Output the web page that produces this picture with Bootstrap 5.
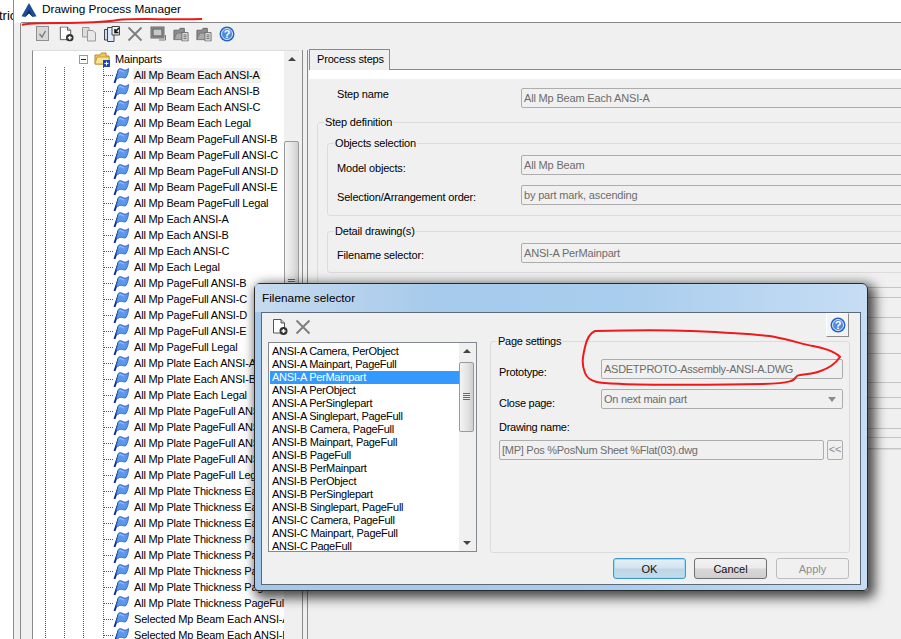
<!DOCTYPE html>
<html lang="en">
<head>
<meta charset="UTF-8">
<title>Drawing Process Manager</title>
<link href="https://cdn.jsdelivr.net/npm/bootstrap@5.3.0/dist/css/bootstrap.min.css" rel="stylesheet">
<style>
html, body { margin: 0; height: 639px; overflow: hidden; }
body { width: 901px; background: #f0f0f0; color: #000; font: 11px/16px "Liberation Sans", Arial, sans-serif; letter-spacing: -.17px; position: relative; }
.app-title { height: 23px; background: #fff; }
.outside-strip { width: 14px; flex: none; border-right: 1px solid #8a8a8a; background: #fff; overflow: hidden; }
.outside-strip span { display: block; margin-top: 8px; margin-left: -1px; font-size: 13px; letter-spacing: 0; }
.app-logo { margin: 3px 0 0 7px; flex: none; }
.title-text { font-size: 11.8px; letter-spacing: 0; padding: 1px 0 0 5px; }
.app-body { height: 616px; }
.frame-left { width: 7px; flex: none; border-right: 1px solid #8a8a8a; }
.main-zone { width: 880px; flex: none; border-top: 1px solid #8a8a8a; margin-top: -1px; }
.tool-strip { height: 27px; padding: 3px 0 0 14px; gap: 7px; }
.tool-strip svg { width: 16px; height: 16px; flex: none; }
.tree-pane { width: 267px; margin-left: 11px; height: 590px; background: #fff; border-left: 1px solid #8a8a8a; border-top: 1px solid #dcdcdc; overflow: hidden; position: relative; flex: none; }
.tree-rows { width: 251px; flex: none; height: 590px; overflow: hidden; background-image: linear-gradient(#555 50%, transparent 50%), linear-gradient(#555 50%, transparent 50%), linear-gradient(#555 50%, transparent 50%), linear-gradient(#555 50%, transparent 50%); background-size: 1px 2px; background-repeat: repeat-y; background-position: 12px 0, 31px 0, 50px 0, 70px 16px; }
.tree-row { height: 16px; white-space: nowrap; overflow: hidden; padding-left: 70px; }
.tree-row svg { flex: none; }
.dots { width: 10px; flex: none; border-top: 1px dotted #555; }
.row-text { padding: 0 1px; margin-left: 4px; line-height: 15px; }
.row-on { background: #f0f0f0; }
.parent-row { padding-left: 46px; background: #fff; }
.expander { width: 9px; height: 9px; flex: none; border: 1px solid #999; background: #fff; position: relative; margin-right: 6px; }
.expander::after { content: ""; position: absolute; left: 1px; right: 1px; top: 3px; height: 1px; background: #222; }
.scroll-track { width: 15px; background: #f0f0f0; height: 590px; position: relative; flex: none; }
.scroll-arrow { width: 0; height: 0; border: 4px solid transparent; border-top: 0; border-bottom: 4px solid #444; position: absolute; left: 4px; top: 6px; }
.scroll-thumb { position: absolute; left: 0; width: 15px; border: 1px solid #9a9a9a; border-radius: 2px; background: linear-gradient(90deg, #f4f4f4, #e2e2e2 60%, #cfcfcf); }
.grip { position: absolute; left: 3px; width: 7px; height: 7px; background: repeating-linear-gradient(#666 0 1px, #eee 1px 2px); }
.splitter { width: 6px; flex: none; margin-left: 3px; border-left: 1px solid #8a8a8a; border-right: 1px solid #8a8a8a; }
.steps-pane { width: 592px; flex: none; margin-left: 1px; margin-top: -1px; overflow: hidden; height: 591px; }
.tab-head { height: 21px; }
.tab-one { width: 81px; height: 21px; flex: none; white-space: nowrap; border: 1px solid #8a8a8a; border-bottom: 0; background: #f0f0f0; padding: 1px 0 0 7px; }
.tab-rest { flex: 1; border-bottom: 1px solid #8a8a8a; }
.tab-white { height: 9px; background: #fff; }
.form-line { height: 20px; margin-bottom: 10px; }
.field-cap { flex: none; white-space: nowrap; }
.win-input { flex: 1; min-width: 0; height: 20px; border: 1px solid #adadad; border-radius: 2px; color: #6d6d6d; padding: 1px 2px; line-height: 16px; white-space: nowrap; background: #f0f0f0; }
.step-form { padding: 9px 0 0 8px; width: 640px; }
.step-name-line { margin-bottom: 0; }
.step-name-cap { width: 204px; padding-left: 20px; margin-top: -2px; }
.nested-cap { width: 193px; padding-left: 9px; }
.win-group { border: 1px solid #dcdcdc; border-radius: 3px; margin: 0; padding: 0; min-width: 0; }
.win-group > legend { float: none; width: auto; font-size: 11px; line-height: 16px; margin: 0 0 0 6px; padding: 0 1px; }
.outer-group { margin-top: 6px; }
.inner-group { margin: 5px 0 0 9px; }
.detail-group { margin-top: 7px; }
.detail-group .form-line { margin-bottom: 9px; }
.behind-line { border-bottom: 1px solid #c4c4c4; }
.dialog-window { position: absolute; left: 254px; top: 283px; width: 614px; height: 308px; border: 1px solid #2a2a2a; border-radius: 6px 6px 4px 4px; box-shadow: 4px 4px 12px 3px rgba(0,0,0,.7); background: linear-gradient(90deg, #a4c8ea 0, #a9cded 60%, #c6ddf4 100%); padding: 0 6px 6px 6px; }
.dialog-title { height: 28px; padding: 6px 0 0 7px; font-size: 11.8px; letter-spacing: 0; background: linear-gradient(90deg, rgba(210,225,240,.75), rgba(170,205,238,0) 30%); margin: 0 -6px; }
.dialog-client { height: 273px; border: 1px solid #5a6a78; background: #f0f0f0; position: relative; }
.dialog-top { height: 29px; padding: 6px 0 0 9px; gap: 7px; }
.dialog-cols { padding-left: 6px; }
.name-list { width: 209px; height: 210px; flex: none; border: 1px solid #828790; background: #fff; overflow: hidden; }
.list-rows { width: 190px; flex: none; padding: 2px 0 0 1px; overflow: hidden; height: 208px; letter-spacing: -.28px; }
.list-line { height: 13px; line-height: 13px; padding-left: 2px; white-space: nowrap; }
.list-on { background: #3399ff; color: #fff; }
.list-scroll { width: 17px; flex: none; position: relative; background: #f0f0f0; }
.list-arrow-down { width: 0; height: 0; border: 4px solid transparent; border-bottom: 0; border-top: 4px solid #444; position: absolute; left: 4px; bottom: 6px; }
.page-group { width: 360px; height: 220px; flex: none; margin-left: 13px; margin-top: -9px; letter-spacing: -.27px; }
.page-line { height: 20px; margin: 0 6px 10px 8px; }
.first-line { margin-top: 10px; }
.page-cap { width: 102px; flex: none; }
.cap-proto { margin-top: 5px; }
.cap-close { margin-top: 6px; }
.name-cap { margin: 5px 0 5px 8px; }
.combo-arrow { width: 0; height: 0; border: 4px solid transparent; border-bottom: 0; border-top: 5px solid #8b8b8b; margin: 6px 4px 0 auto; }
.more-btn { width: 16px; height: 20px; margin-left: 3px; border: 1px solid #adadad; border-radius: 2px; color: #8a8a8a; line-height: 16px; text-align: center; flex: none; }
.help-btn { position: absolute; right: 11px; top: 0; width: 23px; height: 24px; background: #f4f4f4; border: 1px solid; border-color: #fff #8a8a8a #8a8a8a #fff; display: flex; align-items: center; justify-content: center; }
.dialog-foot { gap: 9px; padding: 5px 11px 0 0; justify-content: flex-end; }
.win-btn { width: 73px; height: 21px; padding: 0; border-radius: 3px; font-size: 11px; line-height: 18px; color: #111; border: 1px solid #707070; background: linear-gradient(#f2f2f2 0, #ebebeb 48%, #d8d8d8 52%, #cfcfcf 100%); }
.win-btn-main { margin-right: -1px; border-color: #3c9ad0; box-shadow: inset 0 0 0 1px #9fdcf5; background: linear-gradient(#e6f0f7 0, #d3e3ef 48%, #bdd5e6 52%, #c3dceb 100%); }
.win-btn:disabled { opacity: 1; color: #8f8f8f; border-color: #bcbcbc; background: #f0f0f0; }
.ink-layer { position: absolute; left: 0; top: 0; pointer-events: none; }
</style>
</head>
<body>
<svg width="0" height="0" class="position-absolute">
  <symbol id="flag-icon" viewBox="0 0 16 16">
    <path d="M1.500 16 5.500 4" stroke="#0d2fa8" stroke-width="2" fill="none"/>
    <path d="M5 3C7 0 9 2.500 11 3S14 2.500 15.500 1.500C15.500 5 14.500 8 13 10.500 11 12 9 9.500 6.500 10.500 5 11 4 12 3 13Z" fill="#5d97ea" stroke="#2458c0" stroke-width=".8"/>
    <path d="M6 4C8 2.500 9 5 11 5" stroke="#a9cdf7" fill="none"/>
  </symbol>
  <symbol id="doc-plus" viewBox="0 0 17 16">
    <path d="M2.500.5H10L13.500 4V14H2.500Z" fill="#fdfdfd" stroke="#555"/>
    <path d="M10 .5V4H13.500" fill="#ccc" stroke="#555"/>
    <circle cx="12.500" cy="12" r="4" fill="#333"/>
    <path d="M10.500 12H14.500M12.500 10V14" stroke="#fff" stroke-width="1.500"/>
  </symbol>
  <symbol id="cross-icon" viewBox="0 0 16 16">
    <path d="M1.500 1.500 14.500 14.500M14.500 1.500 1.500 14.500" stroke="#808080" stroke-width="2"/>
  </symbol>
  <symbol id="help-icon" viewBox="0 0 16 16">
    <circle cx="8" cy="8" r="7.500" fill="#2a63c6"/>
    <circle cx="8" cy="8" r="5.500" fill="#4f8ae0" stroke="#dbe8fa"/>
    <text x="8" y="12" text-anchor="middle" font-family="Liberation Sans" font-weight="700" font-size="11" fill="#fff">?</text>
  </symbol>
  <symbol id="folder-docs" viewBox="0 0 17 16">
    <path d="M1 4H6L7.500 2H12V6L1 14Z" fill="#8d8d8d" stroke="#666"/>
    <path d="M1 14 4 7H12V14Z" fill="#aaa" stroke="#777"/>
    <path d="M9.500 6.500H16V15.500H9.500Z" fill="#e9e9e9" stroke="#666"/>
    <path d="M11 9H14.500M11 11H14.500M11 13H14.500" stroke="#555"/>
  </symbol>
</svg>

<div class="app-title d-flex">
  <div class="outside-strip"><span>tric</span></div>
  <svg width="16" height="15" viewBox="0 0 16 16" class="app-logo"><path d="M8 0 16 14 12 15 8 11 4 15 0 14Z" fill="#1d4e96"/><path d="M8 7 12 15 8 11 4 15Z" fill="#0c2f68"/></svg>
  <div class="title-text">Drawing Process Manager</div>
</div>

<div class="app-body d-flex">
  <div class="outside-strip"></div>
  <div class="frame-left"></div>
  <div class="main-zone">
    <div class="tool-strip d-flex">
      <svg viewBox="0 0 16 16"><rect x="1.500" y=".5" width="12" height="14" fill="#d8d8d8" stroke="#8f8f8f"/><path d="M4.500 8 7 11 10.500 5" stroke="#777" stroke-width="1.300" fill="none"/></svg>
      <svg viewBox="0 0 17 16"><use href="#doc-plus"/></svg>
      <svg viewBox="0 0 16 16"><path d="M1.500 1.500H8V11H1.500Z" fill="#ddd" stroke="#999"/><path d="M6.500 4.500H12L14.500 7V15H6.500Z" fill="#e8e8e8" stroke="#999"/></svg>
      <svg viewBox="0 0 16 16"><path d="M.5 3.500H7V14H.5Z" fill="#cfdff2" stroke="#444"/><path d="M3.500 1.500H10V15.500H3.500Z" fill="#dfeafa" stroke="#444"/><path d="M8 .5H15.500V9H8Z" fill="#eee" stroke="#444"/><path d="M15 2 11 6M11 3V6.500H14.500" stroke="#111" stroke-width="1.500" fill="none"/></svg>
      <svg viewBox="0 0 16 16"><use href="#cross-icon"/></svg>
      <svg viewBox="0 0 16 16"><rect x="1" y="1" width="13" height="11" fill="#9c9c9c" stroke="#666"/><rect x="3" y="3" width="9" height="7" fill="#c8c8c8" stroke="#555"/><path d="M9 14H15.500V9" stroke="#777" fill="none"/></svg>
      <svg viewBox="0 0 17 16"><use href="#folder-docs"/></svg>
      <svg viewBox="0 0 17 16"><use href="#folder-docs"/></svg>
      <svg viewBox="0 0 16 16"><use href="#help-icon"/></svg>
    </div>
    <div class="d-flex">
      <div class="tree-pane d-flex">
        <div class="tree-rows" id="treeRows"></div>
        <div class="scroll-track">
          <div class="scroll-arrow"></div>
          <div class="scroll-thumb" style="top:90px;height:300px"><div class="grip" style="top:137px"></div></div>
        </div>
      </div>
      <div class="splitter"></div>
      <div class="steps-pane">
        <div class="tab-head d-flex">
          <div class="tab-one">Process steps</div>
          <div class="tab-rest"></div>
        </div>
        <div class="tab-white"></div>
        <div class="step-form">
          <div class="form-line step-name-line d-flex">
            <div class="field-cap step-name-cap">Step name</div>
            <div class="win-input">All Mp Beam Each ANSI-A</div>
          </div>
          <fieldset class="win-group outer-group">
            <legend>Step definition</legend>
            <fieldset class="win-group inner-group">
              <legend>Objects selection</legend>
              <div class="form-line d-flex mt-1">
                <div class="field-cap nested-cap cap-proto">Model objects:</div>
                <div class="win-input">All Mp Beam</div>
              </div>
              <div class="form-line d-flex">
                <div class="field-cap nested-cap mt-1">Selection/Arrangement order:</div>
                <div class="win-input">by part mark, ascending</div>
              </div>
            </fieldset>
            <fieldset class="win-group inner-group detail-group">
              <legend>Detail drawing(s)</legend>
              <div class="form-line d-flex mt-1">
                <div class="field-cap nested-cap mt-1">Filename selector:</div>
                <div class="win-input">ANSI-A PerMainpart</div>
              </div>
            </fieldset>
            <div id="behindLines"></div>
          </fieldset>
        </div>
      </div>
    </div>
  </div>
</div>

<div class="dialog-window">
  <div class="dialog-title">Filename selector</div>
  <div class="dialog-client">
    <div class="dialog-top d-flex">
      <svg width="17" height="16"><use href="#doc-plus"/></svg>
      <svg width="16" height="16"><use href="#cross-icon"/></svg>
    </div>
    <div class="help-btn"><svg width="16" height="16"><use href="#help-icon"/></svg></div>
    <div class="dialog-cols d-flex">
      <div class="name-list d-flex">
        <div class="list-rows" id="nameRows"></div>
        <div class="list-scroll">
          <div class="scroll-arrow"></div>
          <div class="scroll-thumb" style="top:19px;height:70px"><div class="grip" style="top:30px"></div></div>
          <div class="list-arrow-down"></div>
        </div>
      </div>
      <fieldset class="win-group page-group">
        <legend>Page settings</legend>
        <div class="page-line first-line d-flex">
          <div class="page-cap cap-proto">Prototype:</div>
          <div class="win-input">ASDETPROTO-Assembly-ANSI-A.DWG</div>
        </div>
        <div class="page-line d-flex">
          <div class="page-cap cap-close">Close page:</div>
          <div class="win-input d-flex">On next main part<span class="combo-arrow"></span></div>
        </div>
        <div class="name-cap">Drawing name:</div>
        <div class="page-line d-flex">
          <div class="win-input">[MP] Pos %PosNum Sheet %Flat(03).dwg</div>
          <div class="more-btn">&lt;&lt;</div>
        </div>
      </fieldset>
    </div>
    <div class="dialog-foot d-flex">
      <button type="button" class="btn win-btn win-btn-main">OK</button>
      <button type="button" class="btn win-btn">Cancel</button>
      <button type="button" class="btn win-btn" disabled>Apply</button>
    </div>
  </div>
</div>

<svg class="ink-layer" width="901" height="639" fill="none" stroke="#f01818" stroke-width="2">
  <path d="M22 25C26 23 40 23 60 23S105 22 118 20 170 20 202 19"/>
  <path d="M840 357C835 351 820 347 813 346S790 340 775 337 713 332 690 331 640 330 595 331C590 333 587 338 585 347S581 363 585 373 600 383 622 384 720 385 763 384 790 376 800 375 830 372 840 357Z"/>
</svg>

<script>
  // tree rows
  const treeItems = ["All Mp Beam Each ANSI-A","All Mp Beam Each ANSI-B","All Mp Beam Each ANSI-C","All Mp Beam Each Legal",
    "All Mp Beam PageFull ANSI-B","All Mp Beam PageFull ANSI-C","All Mp Beam PageFull ANSI-D","All Mp Beam PageFull ANSI-E","All Mp Beam PageFull Legal",
    "All Mp Each ANSI-A","All Mp Each ANSI-B","All Mp Each ANSI-C","All Mp Each Legal",
    "All Mp PageFull ANSI-B","All Mp PageFull ANSI-C","All Mp PageFull ANSI-D","All Mp PageFull ANSI-E","All Mp PageFull Legal",
    "All Mp Plate Each ANSI-A","All Mp Plate Each ANSI-B","All Mp Plate Each Legal",
    "All Mp Plate PageFull ANSI-B","All Mp Plate PageFull ANSI-C","All Mp Plate PageFull ANSI-D","All Mp Plate PageFull ANSI-E","All Mp Plate PageFull Legal",
    "All Mp Plate Thickness Each ANSI-A","All Mp Plate Thickness Each ANSI-B","All Mp Plate Thickness Each Legal","All Mp Plate Thickness PageFull ANSI-B","All Mp Plate Thickness PageFull ANSI-C","All Mp Plate Thickness PageFull ANSI-D","All Mp Plate Thickness PageFull ANSI-E","All Mp Plate Thickness PageFull Legal",
    "Selected Mp Beam Each ANSI-A","Selected Mp Beam Each ANSI-B"];
  let treeHtml = `<div class="tree-row parent-row d-flex align-items-center"><span class="expander"></span>
    <svg width="17" height="16" viewBox="0 0 17 16"><path d="M1 4H6L7.500 2H12V5H15V13H1Z" fill="#f4c75e" stroke="#b98a24"/><path d="M1 13 3 6H15V13Z" fill="#fbe49a" stroke="#c99a30"/><rect x="9" y="9" width="7" height="7" fill="#1f45b8"/><path d="M12.500 10.500V14.500M10.500 12.500H14.500" stroke="#fff"/></svg>
    <span class="ms-1">Mainparts</span></div>`;
  treeItems.forEach((name, i) => {
    treeHtml += `<div class="tree-row d-flex align-items-center"><span class="dots"></span><svg width="16" height="16"><use href="#flag-icon"/></svg><span class="row-text${i === 0 ? " row-on" : ""}">${name}</span></div>`;
  });
  document.getElementById("treeRows").innerHTML = treeHtml;

  // filename selector list
  const fileNames = ["ANSI-A Camera, PerObject","ANSI-A Mainpart, PageFull","ANSI-A PerMainpart","ANSI-A PerObject","ANSI-A PerSinglepart","ANSI-A Singlepart, PageFull",
    "ANSI-B Camera, PageFull","ANSI-B Mainpart, PageFull","ANSI-B PageFull","ANSI-B PerMainpart","ANSI-B PerObject","ANSI-B PerSinglepart","ANSI-B Singlepart, PageFull",
    "ANSI-C Camera, PageFull","ANSI-C Mainpart, PageFull","ANSI-C PageFull"];
  document.getElementById("nameRows").innerHTML = fileNames.map((name, i) =>
    `<div class="list-line${i === 2 ? " list-on" : ""}">${name}</div>`).join("");

  // rows of the form that only show to the right of the dialog
  const behindGaps = [15, 10, 20, 16, 20, 29, 15, 11, 20, 9, 11];
  document.getElementById("behindLines").innerHTML = behindGaps.map(h =>
    `<div class="behind-line" style="height:${h}px"></div>`).join("");
</script>
<script src="https://cdn.jsdelivr.net/npm/bootstrap@5.3.0/dist/js/bootstrap.bundle.min.js"></script>
</body>
</html>
